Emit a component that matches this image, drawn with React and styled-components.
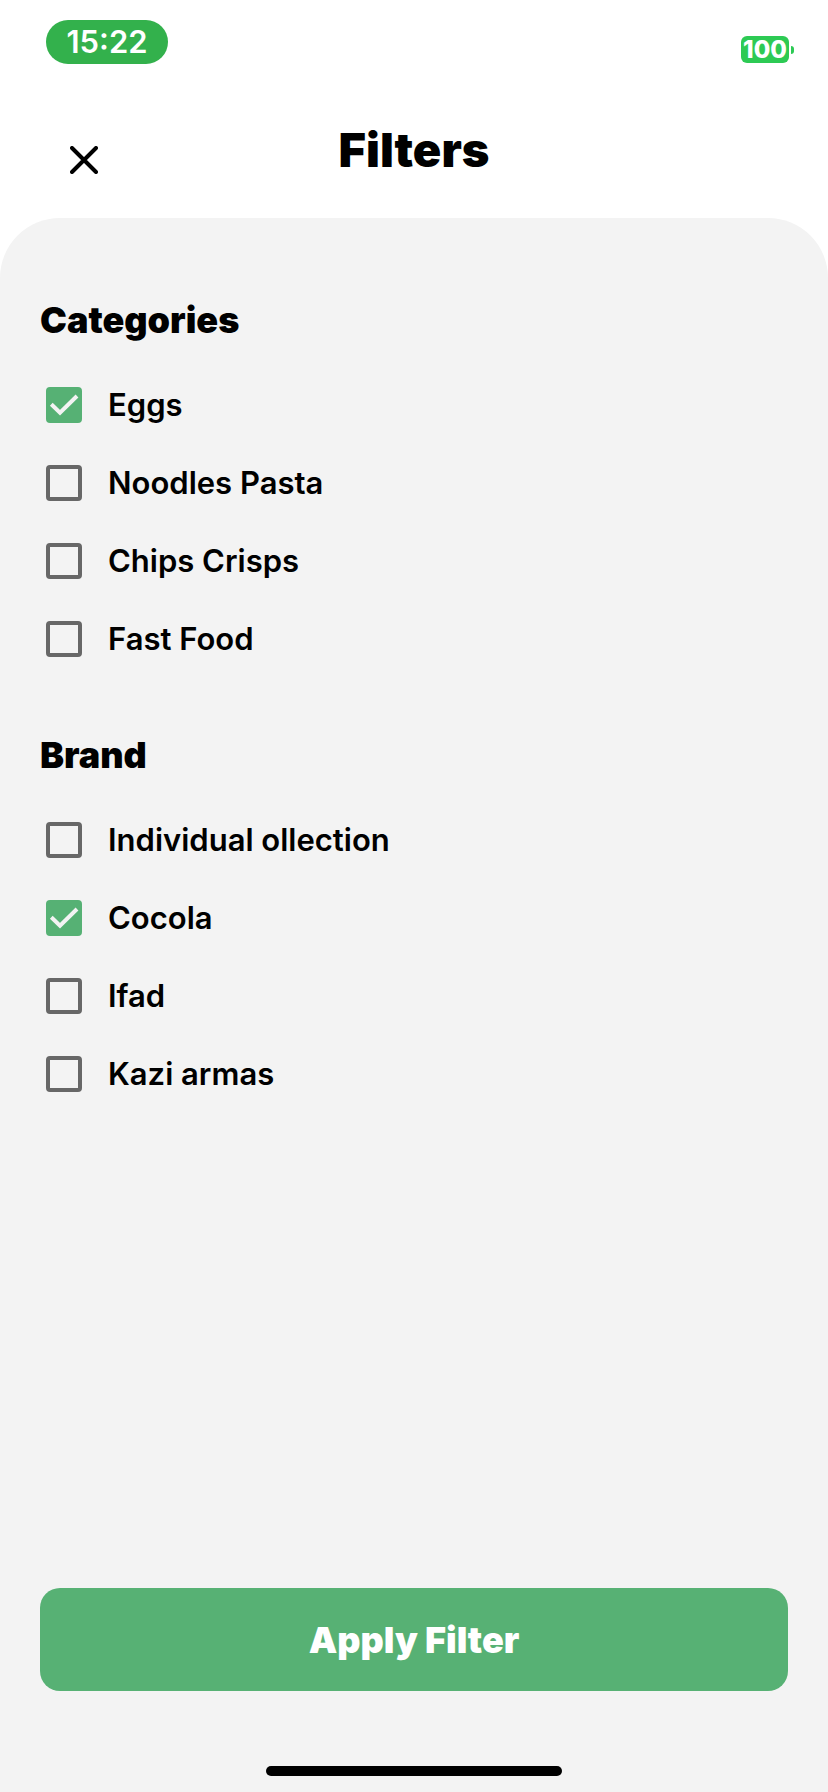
import React, { useState } from "react";
import styled, { createGlobalStyle } from "styled-components";

const GlobalStyle = createGlobalStyle`
  *, *::before, *::after { box-sizing: border-box; }
  body {
    margin: 0;
    background: #ffffff;
    color: #000000;
    font-family: Inter, "Liberation Sans", sans-serif;
  }
`;

const Screen = styled.div`
  display: flex;
  flex-direction: column;
  min-height: 100vh;
`;

const StatusBar = styled.div`
  display: flex;
  justify-content: space-between;
  align-items: flex-start;
  padding: 20px 34px 0 46px;
`;

const Clock = styled.time`
  display: flex;
  align-items: center;
  justify-content: center;
  width: 122px;
  height: 44px;
  border-radius: 22px;
  background: #33b14c;
  color: #ffffff;
  font-size: 31px;
  line-height: 36px;
  font-weight: 600;
`;

const Battery = styled.div`
  display: flex;
  align-items: center;
  gap: 2px;
  margin-top: 16px;
`;

const BatteryLevel = styled.span`
  width: 48px;
  height: 27px;
  border-radius: 6px;
  background: #2dca54;
  color: #ffffff;
  font-size: 24px;
  line-height: 27px;
  font-weight: 800;
  text-align: center;
`;

const BatteryTip = styled.span`
  width: 3px;
  height: 8px;
  border-radius: 0 4px 4px 0;
  background: #2dca54;
`;

const Header = styled.header`
  display: grid;
  grid-template-columns: 76px 1fr 76px;
  align-items: start;
  padding: 58px 46px 40px;
`;

const CloseButton = styled.button`
  display: flex;
  align-items: center;
  justify-content: center;
  width: 76px;
  height: 56px;
  margin-top: 10px;
  margin-bottom: -10px;
  padding: 0;
  border: 0;
  background: none;
  color: inherit;
  cursor: pointer;
`;

const Title = styled.h1`
  margin: 0;
  font-size: 47px;
  line-height: 56px;
  font-weight: 900;
  text-align: center;
`;

const Panel = styled.main`
  display: flex;
  flex: 1;
  flex-direction: column;
  padding: 80px 40px 16px;
  border-radius: 60px 60px 0 0;
  background: #f3f3f3;
`;

const Groups = styled.form`
  display: flex;
  flex: 1;
  flex-direction: column;
  gap: 55px;
`;

const Group = styled.fieldset`
  min-width: 0;
  margin: 0;
  padding: 0;
  border: 0;
`;

const GroupTitle = styled.legend`
  margin-bottom: 24px;
  padding: 0;
  font-size: 36px;
  line-height: 44px;
  font-weight: 900;
`;

const Option = styled.label`
  display: flex;
  align-items: center;
  gap: 26px;
  height: 78px;
  padding-left: 6px;
  font-size: 31px;
  line-height: 40px;
  font-weight: 600;
  cursor: pointer;
`;

const Box = styled.span`
  display: grid;
  flex: none;
  width: 36px;
  height: 36px;

  > * {
    grid-area: 1 / 1;
  }
`;

const Check = styled.input`
  appearance: none;
  width: 36px;
  height: 36px;
  margin: 0;
  border: 4px solid #676767;
  border-radius: 4px;
  cursor: pointer;

  &:checked {
    border-color: #56b174;
    background: #56b174;
  }

  & + svg {
    visibility: hidden;
    pointer-events: none;
  }

  &:checked + svg {
    visibility: visible;
  }
`;

const ApplyButton = styled.button`
  height: 103px;
  margin-top: 40px;
  border: 0;
  border-radius: 20px;
  background: #57b174;
  color: #ffffff;
  font: inherit;
  font-size: 36px;
  line-height: 44px;
  font-weight: 900;
  cursor: pointer;
`;

const HomeIndicator = styled.div`
  align-self: center;
  width: 296px;
  height: 10px;
  margin-top: 75px;
  border-radius: 5px;
  background: #000000;
`;

const groups = [
  { title: "Categories", options: ["Eggs", "Noodles Pasta", "Chips Crisps", "Fast Food"] },
  { title: "Brand", options: ["Individual ollection", "Cocola", "Ifad", "Kazi armas"] },
];

function FilterOption({ label, checked, onChange }) {
  return (
    <Option>
      <Box>
        <Check type="checkbox" checked={checked} onChange={onChange} />
        <svg width="36" height="36" viewBox="0 0 36 36" fill="none" aria-hidden="true">
          <path d="M5.3 17.3L14 25.6L31 9" stroke="#f3f3f3" strokeWidth="4" />
        </svg>
      </Box>
      {label}
    </Option>
  );
}

export default function App() {
  const [selected, setSelected] = useState(["Eggs", "Cocola"]);
  const toggle = (name) =>
    setSelected((now) =>
      now.includes(name) ? now.filter((item) => item !== name) : [...now, name]
    );

  return (
    <Screen>
      <GlobalStyle />
      <StatusBar>
        <Clock>15:22</Clock>
        <Battery>
          <BatteryLevel>100</BatteryLevel>
          <BatteryTip />
        </Battery>
      </StatusBar>
      <Header>
        <CloseButton type="button" aria-label="Close">
          <svg width="28" height="28" viewBox="0 0 28 28" fill="none" aria-hidden="true">
            <path
              d="M2 2L26 26M26 2L2 26"
              stroke="currentColor"
              strokeWidth="4"
              strokeLinecap="round"
            />
          </svg>
        </CloseButton>
        <Title>Filters</Title>
      </Header>
      <Panel>
        <Groups id="filters" onSubmit={(event) => event.preventDefault()}>
          {groups.map((group) => (
            <Group key={group.title}>
              <GroupTitle>{group.title}</GroupTitle>
              {group.options.map((name) => (
                <FilterOption
                  key={name}
                  label={name}
                  checked={selected.includes(name)}
                  onChange={() => toggle(name)}
                />
              ))}
            </Group>
          ))}
        </Groups>
        <ApplyButton type="submit" form="filters">Apply Filter</ApplyButton>
        <HomeIndicator />
      </Panel>
    </Screen>
  );
}
